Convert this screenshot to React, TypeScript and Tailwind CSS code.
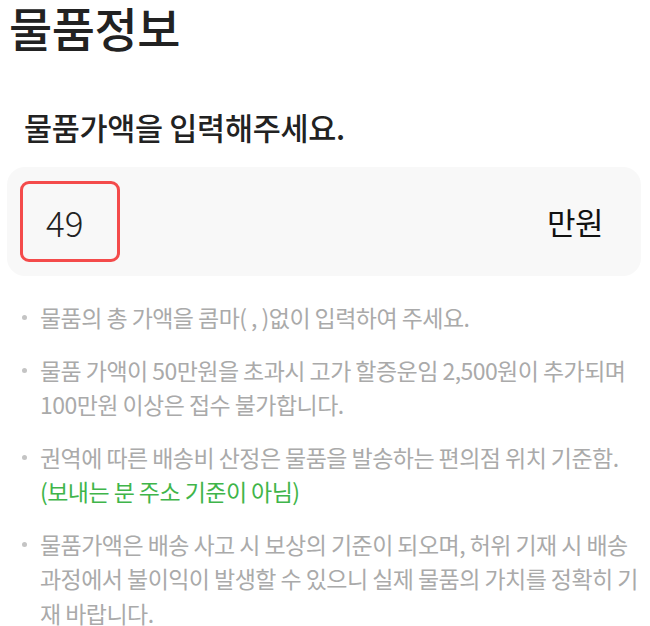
import React from "react";

const F = { fontFamily: '"Noto Sans CJK KR", "Noto Sans", sans-serif' };

function Bullet({ children }: { children: React.ReactNode }) {
  return (
    <li className="flex items-start">
      <span className="mt-[15px] ml-[22px] mr-[13px] h-[5px] w-[5px] shrink-0 rounded-full bg-[#c4c4c4]" />
      <div className="whitespace-nowrap text-[23px] leading-[34.5px] tracking-[-0.55px] text-[#aaaaaa]">{children}</div>
    </li>
  );
}

export default function App() {
  return (
    <div className="w-[650px] bg-white pb-[10px]" style={F}>
      <h1 className="pl-[9px] text-[47px] font-medium leading-[54px] tracking-[-0.5px] text-[#222222]">물품정보</h1>
      <h2 className="mt-[53px] pl-[24px] text-[30.5px] font-medium leading-[40px] tracking-[-0.3px] text-[#222222]">
        물품가액을 입력해주세요.
      </h2>
      <div className="mx-[7px] mt-[20px] flex h-[109px] w-[634px] items-center justify-between rounded-[18px] bg-[#f8f8f8] pl-[13px] pr-[38px]">
        <div className="flex h-[81px] w-[100px] items-center rounded-[9px] border-[3px] border-[#f44b4b] pl-[23px]">
          <span className="text-[35px] font-light leading-none text-[#222222]">49</span>
        </div>
        <span className="text-[31px] leading-none tracking-[-0.5px] text-[#111111]">만원</span>
      </div>
      <ul className="mt-[24px] flex flex-col gap-[18px]">
        <Bullet>물품의 총 가액을 콤마( , )없이 입력하여 주세요.</Bullet>
        <Bullet>
          물품 가액이 50만원을 초과시 고가 할증운임 2,500원이 추가되며
          <br />
          100만원 이상은 접수 불가합니다.
        </Bullet>
        <Bullet>
          권역에 따른 배송비 산정은 물품을 발송하는 편의점 위치 기준함.
          <br />
          <span className="text-[#3fb54a]">(보내는 분 주소 기준이 아님)</span>
        </Bullet>
        <Bullet>
          물품가액은 배송 사고 시 보상의 기준이 되오며, 허위 기재 시 배송
          <br />
          과정에서 불이익이 발생할 수 있으니 실제 물품의 가치를 정확히 기
          <br />
          재 바랍니다.
        </Bullet>
      </ul>
    </div>
  );
}
